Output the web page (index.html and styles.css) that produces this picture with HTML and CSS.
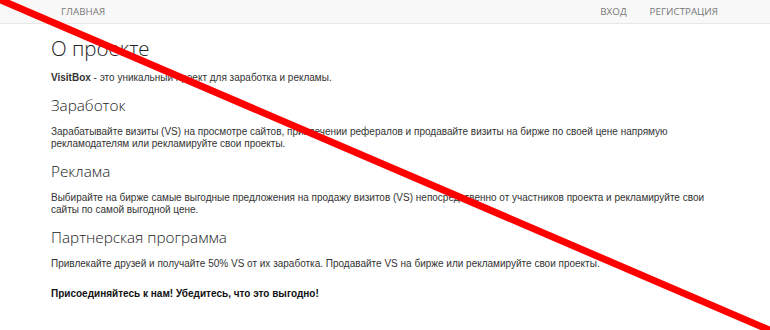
FILE: index.html
```html
<!DOCTYPE html>
<html>
<head>
    <meta charset="UTF-8">
    <title>VisitBox - О проекте</title>
    <link rel="stylesheet" href="styles.css">
</head>
<body>

	<div class="navbar">
	    <div class="nav_inner">
	        <ul class="nav_left">
	            <li><a href="">Главная</a></li>
	        </ul>
	        <ul class="nav_right">
	            <li><a href="">Вход</a></li>
	            <li><a href="">Регистрация</a></li>
	        </ul>
	    </div>
	</div>

	<div class="content">
	    <h1>О проекте</h1>
	    <p><b>VisitBox</b> - это уникальный проект для заработка и рекламы.</p>

	    <h2>Заработок</h2>
	    <p>Зарабатывайте визиты (VS) на просмотре сайтов, привлечении рефералов и продавайте визиты на бирже по своей цене напрямую рекламодателям или рекламируйте свои проекты.</p>

	    <h2>Реклама</h2>
	    <p>Выбирайте на бирже самые выгодные предложения на продажу визитов (VS) непосредственно от участников проекта и рекламируйте свои сайты по самой выгодной цене.</p>

	    <h2>Партнерская программа</h2>
	    <p>Привлекайте друзей и получайте 50% VS от их заработка. Продавайте VS на бирже или рекламируйте свои проекты.</p>

	    <p class="join"><b>Присоединяйтесь к нам! Убедитесь, что это выгодно!</b></p>
	</div>

	<svg class="cross" width="770" height="330" viewBox="0 0 770 330">
	    <line x1="-4" y1="-2" x2="774" y2="332" stroke="#ff0000" stroke-width="7"/>
	</svg>

</body>
</html>
```

FILE: styles.css
```css
*{
    margin: 0;
    padding: 0;
}
body{
    font-family: "Liberation Sans", Arial, sans-serif;
    font-size: 10px;
    color: #333;
    background: #fff;
}
a{
    text-decoration: none;
}
ul{
    list-style-type: none;
}
.navbar{
    height: 23px;
    background: #f8f8f8;
    border-bottom: 1px solid #e7e7e7;
}
.nav_inner{
    display: flex;
    justify-content: space-between;
    margin: 0 52px 0 61px;
}
.nav_left, .nav_right{
    display: flex;
    gap: 23px;
}
.nav_inner a{
    display: block;
    line-height: 23px;
    font-family: "Open Sans", sans-serif;
    font-size: 9.8px;
    color: #777;
    text-transform: uppercase;
}
.content{
    margin: 0 55px 0 51px;
}
h1{
    margin-top: 11px;
    font-family: "Open Sans", sans-serif;
    font-weight: 300;
    font-size: 20.5px;
    line-height: 27px;
    color: #222;
}
h2{
    margin-top: 10.5px;
    font-family: "Open Sans", sans-serif;
    font-weight: 300;
    font-size: 15.3px;
    line-height: 20px;
    color: #222;
}
p{
    margin-top: 10px;
    line-height: 12px;
}
h2+p{
    margin-top: 11.5px;
}
.join{
    margin-top: 18px;
    color: #111;
}
.cross{
    position: absolute;
    left: 0;
    top: 0;
    pointer-events: none;
}
```
